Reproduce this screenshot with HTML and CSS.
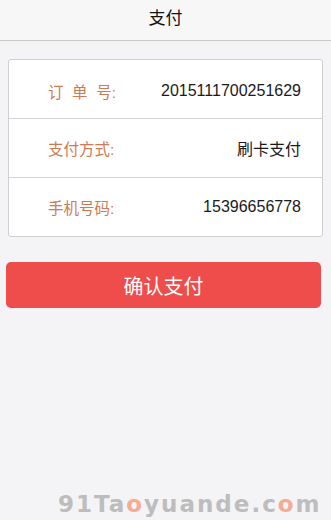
FILE: index.html
```html
<!DOCTYPE html>
<html lang="zh-CN">
<head>
    <meta charset="UTF-8">
    <meta name="viewport" content="width=device-width, initial-scale=1.0">
    <title>支付</title>
    <link rel="stylesheet" href="styles.css">
</head>
<body>
    <header class="topbar">支付</header>

    <div class="order-card">
        <div class="order-row">
            <span class="label">订&nbsp;&nbsp;单&nbsp;&nbsp;号:</span>
            <span class="value">2015111700251629</span>
        </div>
        <div class="order-row">
            <span class="label">支付方式:</span>
            <span class="value">刷卡支付</span>
        </div>
        <div class="order-row">
            <span class="label">手机号码:</span>
            <span class="value">15396656778</span>
        </div>
    </div>

    <button class="pay-btn">确认支付</button>

    <div class="watermark">91Ta<span class="hl">o</span>yuande.c<span class="hl">o</span>m</div>
</body>
</html>
```

FILE: styles.css
```css
body, html {
    margin: 0;
    padding: 0;
    height: 100%;
    font-family: "Liberation Sans", "Noto Sans CJK SC", sans-serif;
    background-color: #f4f3f6;
    color: #222;
    overflow: hidden;
}

body {
    display: flex;
    flex-direction: column;
}

.topbar {
    height: 40px;
    line-height: 38px;
    text-align: center;
    font-size: 17px;
    color: #111;
    background-color: #f7f7f7;
    border-bottom: 1px solid #c9c9c9;
}

.order-card {
    margin: 18px 8px 0 8px;
    background-color: #fff;
    border: 1px solid #cfcfcf;
    border-radius: 3px;
}

.order-row {
    height: 58px;
    display: flex;
    align-items: center;
    justify-content: space-between;
    padding: 0 21px 0 39px;
    border-bottom: 1px solid #d4d4d4;
}

.order-row:first-child {
    padding-top: 4px;
    height: 54px;
}

.order-row:last-child {
    border-bottom: none;
}

.label {
    font-size: 15.5px;
    color: #cf7a52;
}

.value {
    font-size: 16px;
    color: #1a1a1a;
}

.pay-btn {
    margin: 25px 10px 0 6px;
    height: 46px;
    border: none;
    border-radius: 5px;
    background-color: #ef4c4c;
    color: #fff;
    font-family: inherit;
    font-size: 20px;
}

.watermark {
    margin-top: auto;
    margin-bottom: 3px;
    padding-left: 58px;
    font-family: "DejaVu Sans", sans-serif;
    font-weight: bold;
    font-size: 23px;
    letter-spacing: 2px;
    color: #bdbdbd;
}

.watermark .hl {
    color: #f3ad94;
}
```
